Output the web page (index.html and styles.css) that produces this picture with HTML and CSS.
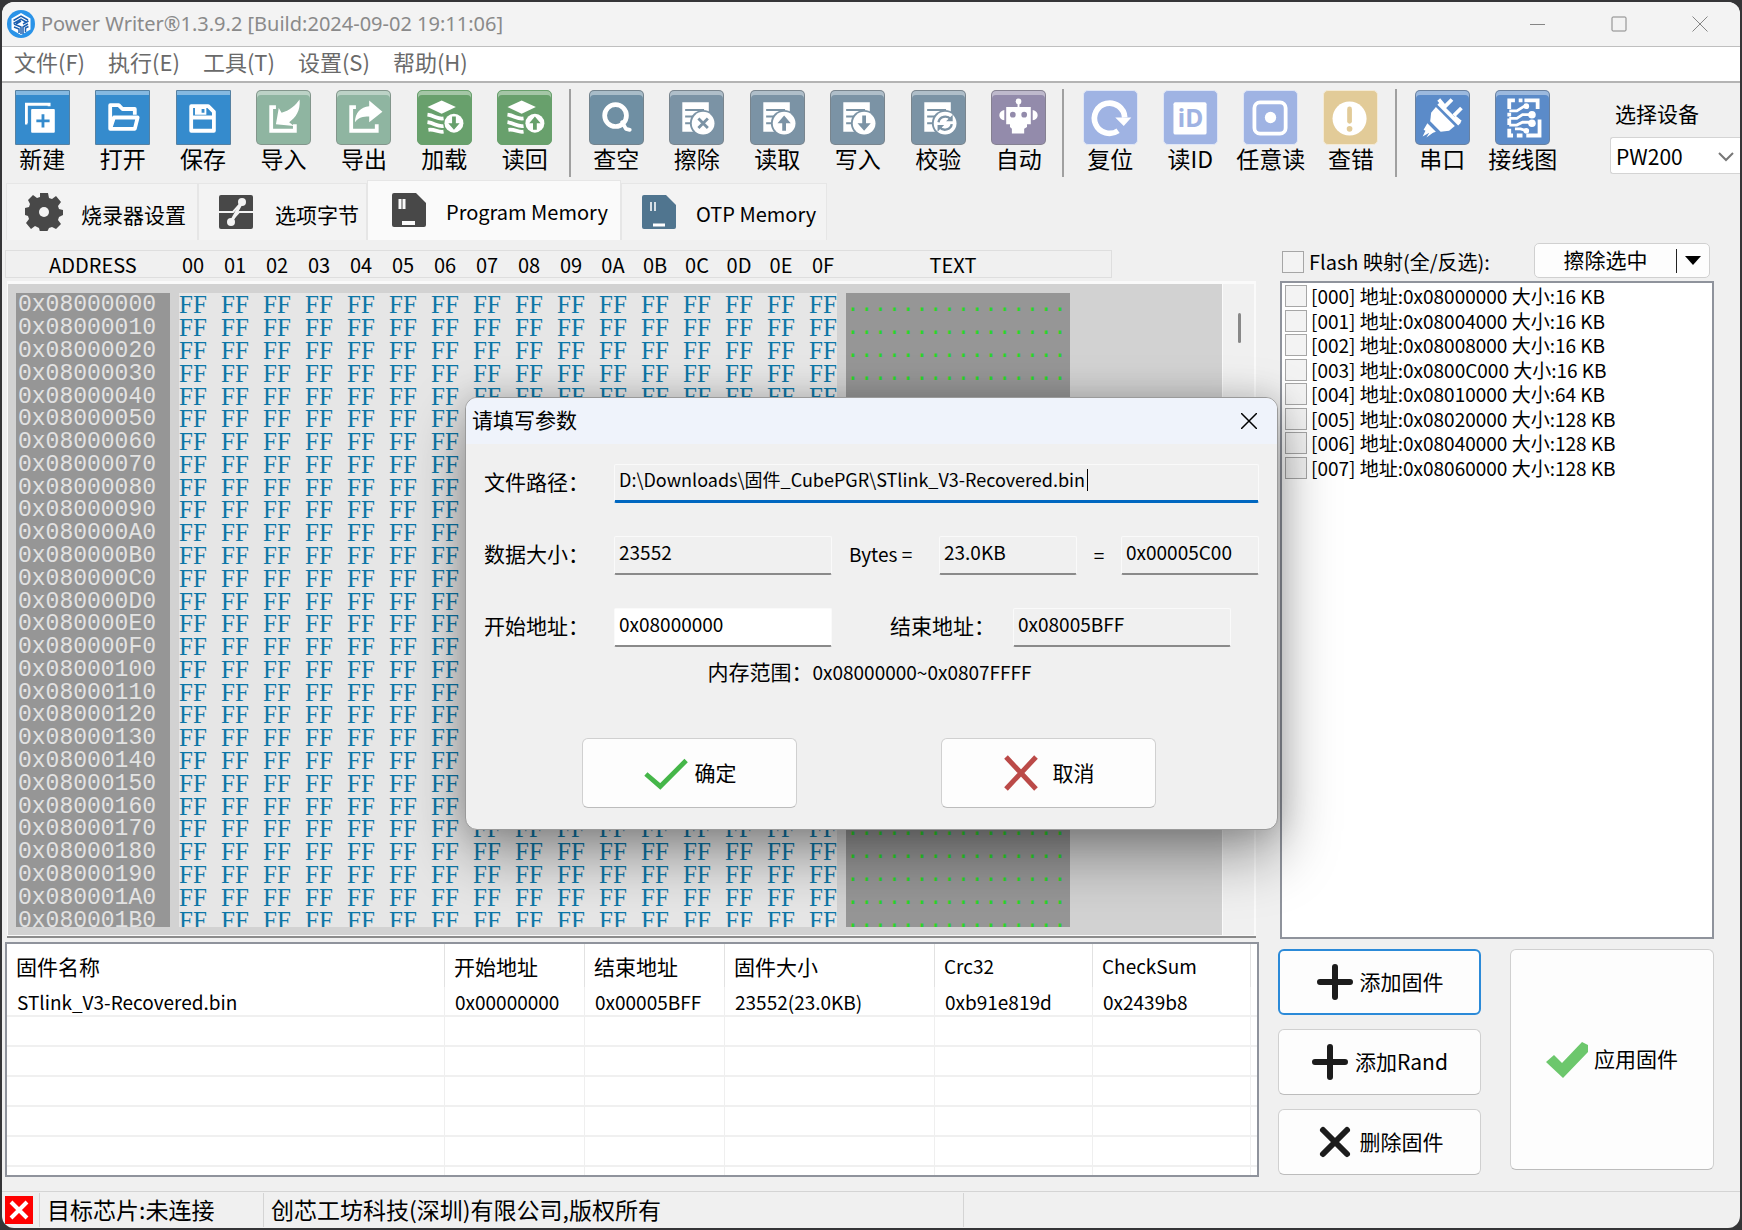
FILE: index.html
```html
<!DOCTYPE html>
<html lang="zh-CN">
<head>
<meta charset="utf-8">
<title>Power Writer</title>
<link rel="stylesheet" href="styles.css">
</head>
<body>
<div class="window">
  <header class="titlebar">
    <svg class="logo" viewBox="0 0 28 28" aria-hidden="true">
      <circle cx="14" cy="14" r="14" fill="#2a93e8"/>
      <path d="M14 3l9.500 5.500v11L14 25l-9.500-5.500v-11z" fill="#fff"/>
      <path d="M6.500 10.500L14 6l7 4M6.500 13.500L14 9l5 3M9 14l5-3M7 17l5 2v4M7 14l7 3v7M16 24v-7l5-3M16 14l5.500-3M18.500 22v-4l3-1.500" fill="none" stroke="#1c5fb0" stroke-width="1.500"/>
    </svg>
    <h1 class="title">Power Writer®1.3.9.2 [Build:2024-09-02 19:11:06]</h1>
    <div class="window-controls">
      <button type="button" aria-label="最小化"><svg viewBox="0 0 16 16"><path d="M0 8.500h15"/></svg></button>
      <button type="button" aria-label="最大化"><svg viewBox="0 0 16 16"><rect x="1" y="1" width="14" height="14" rx="1"/></svg></button>
      <button type="button" aria-label="关闭"><svg viewBox="0 0 16 16"><path d="M.5.5l15 15M15.500.5l-15 15"/></svg></button>
    </div>
  </header>

  <nav class="menubar">
    <a href="#file">文件(F)</a>
    <a href="#run">执行(E)</a>
    <a href="#tools">工具(T)</a>
    <a href="#settings">设置(S)</a>
    <a href="#help">帮助(H)</a>
  </nav>

  <div class="toolbar">
    <div class="tool-group">
      <button type="button" class="tool"><svg class="tile blue" viewBox="0 0 56 56"><path d="M12 34h-1V14h24v2" fill="none" stroke="#fff" stroke-width="3"/><rect x="16" y="19" width="25" height="25" rx="1" fill="#fff"/><path d="M28.500 24.500v14M21.500 31.500h14" stroke="#358bcd" stroke-width="3"/></svg>新建</button>
      <button type="button" class="tool"><svg class="tile blue" viewBox="0 0 56 56"><path d="M15 40V15h9l4 4h13v6M15 40l4-12h25l-3 12z" fill="none" stroke="#fff" stroke-width="4" stroke-linejoin="round"/></svg>打开</button>
      <button type="button" class="tool"><svg class="tile blue" viewBox="0 0 56 56"><path d="M15 16h18l6 6v20H15z" fill="none" stroke="#fff" stroke-width="4" stroke-linejoin="round"/><path d="M15 28h24" stroke="#fff" stroke-width="4"/><path d="M19 18h12v7H19z" fill="#fff"/><path d="M26 19h3v4h-3z" fill="#358bcd"/></svg>保存</button>
      <button type="button" class="tool"><svg class="tile mint" viewBox="0 0 56 56"><path d="M20 17h-5v25h25v-7" fill="none" stroke="#fff" stroke-width="4"/><path d="M45 9c1 12-4 19-11 24l5 4-19-2 3-17 3 5c8-2 15-8 19-14z" fill="#fff"/></svg>导入</button>
      <button type="button" class="tool"><svg class="tile mint" viewBox="0 0 56 56"><path d="M20 17h-5v25h27v-7" fill="none" stroke="#fff" stroke-width="4"/><path d="M34 10l14 12-14 11v-6c-7 0-11 1-15 6 0-10 6-16 15-17z" fill="#fff"/></svg>导出</button>
      <button type="button" class="tool"><svg class="tile green" viewBox="0 0 56 56"><path d="M10 17l15-7 15 7-15 7z" fill="#fff"/><path d="M10 25c8 1 10 5 17 4M10 33c8 1 10 5 17 4M11 41c7-1 10 3 16 2" fill="none" stroke="#fff" stroke-width="4"/><circle cx="38" cy="34" r="11" fill="#68a06c"/><circle cx="38" cy="34" r="10" fill="#fff"/><path d="M36 27h4v7h4l-6 7-6-7h4z" fill="#68a06c"/></svg>加载</button>
      <button type="button" class="tool"><svg class="tile green" viewBox="0 0 56 56"><path d="M10 17l15-7 15 7-15 7z" fill="#fff"/><path d="M10 25c8 1 10 5 17 4M10 33c8 1 10 5 17 4M11 41c7-1 10 3 16 2" fill="none" stroke="#fff" stroke-width="4"/><circle cx="39" cy="34" r="11" fill="#68a06c"/><circle cx="39" cy="34" r="10" fill="#fff"/><path d="M37 41h4v-7h4l-6-7-6 7h4z" fill="#68a06c"/></svg>读回</button>
    </div>
    <div class="tool-group six">
      <button type="button" class="tool"><svg class="tile teal" viewBox="0 0 56 56"><circle cx="27" cy="26" r="11.500" fill="none" stroke="#fff" stroke-width="5"/><path d="M34 33l4 7 4 1" fill="none" stroke="#fff" stroke-width="4" stroke-linejoin="round" stroke-linecap="round"/></svg>查空</button>
      <button type="button" class="tool"><svg class="tile slate" viewBox="0 0 56 56"><path d="M13 12h28v14H13zM13 12h14v31H13z" fill="#fff"/><path d="M16 20h20M16 27h12M16 34h8" stroke="#7b93a5" stroke-width="2"/><circle cx="35" cy="34" r="14" fill="#7b93a5"/><circle cx="35" cy="34" r="12" fill="#fff"/><path d="M30 29l10 10M40 29L30 39" stroke="#7b93a5" stroke-width="3"/></svg>擦除</button>
      <button type="button" class="tool"><svg class="tile slate" viewBox="0 0 56 56"><path d="M13 12h28v14H13zM13 12h14v31H13z" fill="#fff"/><path d="M16 20h20M16 27h12M16 34h8" stroke="#7b93a5" stroke-width="2"/><circle cx="35" cy="34" r="14" fill="#7b93a5"/><circle cx="35" cy="34" r="12" fill="#fff"/><path d="M33 42v-8h-5l7-8 7 8h-5v8z" fill="#7b93a5"/></svg>读取</button>
      <button type="button" class="tool"><svg class="tile slate" viewBox="0 0 56 56"><path d="M13 12h28v14H13zM13 12h14v31H13z" fill="#fff"/><path d="M16 20h20M16 27h12M16 34h8" stroke="#7b93a5" stroke-width="2"/><circle cx="35" cy="34" r="14" fill="#7b93a5"/><circle cx="35" cy="34" r="12" fill="#fff"/><path d="M33 26v8h-5l7 8 7-8h-5v-8z" fill="#7b93a5"/></svg>写入</button>
      <button type="button" class="tool"><svg class="tile slate" viewBox="0 0 56 56"><path d="M13 12h28v14H13zM13 12h14v31H13z" fill="#fff"/><path d="M16 20h20M16 27h12M16 34h8" stroke="#7b93a5" stroke-width="2"/><circle cx="35" cy="34" r="14" fill="#7b93a5"/><circle cx="35" cy="34" r="12" fill="#fff"/><path d="M28 33c1-6 9-8 13-3M42 35c-1 6-9 8-13 3" fill="none" stroke="#7b93a5" stroke-width="2.500"/><path d="M43 25v7h-7zM27 43v-7h7z" fill="#7b93a5"/></svg>校验</button>
      <button type="button" class="tool"><svg class="tile purple" viewBox="0 0 56 56"><circle cx="28" cy="11" r="3" fill="#fff"/><path d="M27 12h2v6h-2zM15 17h26v18h-4v3l-3 2v5H21v-5l-2-2v-3h-4z" fill="#fff"/><path d="M13 20v11c-7-1-7-10 0-11zM43 20v11c7-1 7-10 0-11z" fill="#fff"/><circle cx="22" cy="25" r="3" fill="#938bab"/><circle cx="34" cy="25" r="3" fill="#938bab"/></svg>自动</button>
    </div>
    <div class="tool-group four">
      <button type="button" class="tool"><svg class="tile pale" viewBox="0 0 56 56"><path d="M43 28A16 16 0 1 0 36 42" fill="none" stroke="#fff" stroke-width="6"/><path d="M33 28h17l-8 9z" fill="#fff"/></svg>复位</button>
      <button type="button" class="tool"><svg class="tile pale" viewBox="0 0 56 56"><rect x="10" y="12" width="35" height="34" rx="2" fill="#fff"/><text x="28" y="38" text-anchor="middle" class="id-mark">iD</text></svg>读ID</button>
      <button type="button" class="tool"><svg class="tile pale" viewBox="0 0 56 56"><rect x="11" y="12" width="33" height="33" rx="6" fill="none" stroke="#fff" stroke-width="4"/><circle cx="28" cy="28" r="6" fill="#fff"/></svg>任意读</button>
      <button type="button" class="tool"><svg class="tile sand" viewBox="0 0 56 56"><circle cx="27" cy="29" r="18" fill="#fff"/><path d="M27 19v13" stroke="#e2cb98" stroke-width="5" stroke-linecap="round"/><circle cx="27" cy="40" r="3" fill="#e2cb98"/></svg>查错</button>
    </div>
    <div class="tool-group two">
      <button type="button" class="tool"><svg class="tile royal" viewBox="0 0 56 56"><path d="M24 13l22 22" stroke="#fff" stroke-width="4"/><path d="M21 17l20 20-6 5-9 1-11-11 1-9z" fill="#fff"/><path d="M30 17l8-8M40 26l8-8M24 9l6 7M41 28l6 5" stroke="#fff" stroke-width="4"/><path d="M12 34l9 9-3 1-7 5 3-5-7 4 3-6-2-1z" fill="#fff"/></svg>串口</button>
      <button type="button" class="tool"><svg class="tile royal" viewBox="0 0 56 56"><path d="M28 10h-4M20 10h-6v9M14 23v4M30 10h14v9M46 30v17H32M28 47h-6M18 47h-4v-7M14 36v-7" fill="none" stroke="#fff" stroke-width="4"/><path d="M14 21h8l8-5M14 29h8l6-4h7M14 36h8l6-3h7M20 40h6l6 2" fill="none" stroke="#fff" stroke-width="3"/><g fill="#fff"><circle cx="32" cy="16" r="3"/><circle cx="38" cy="25" r="4"/><circle cx="38" cy="34" r="4"/><circle cx="32" cy="42" r="3"/></g></svg>接线图</button>
    </div>
    <div class="device">
      <label for="device">选择设备</label>
      <div class="device-box">
        <select id="device"><option>PW200</option></select>
        <svg viewBox="0 0 16 10" aria-hidden="true"><path d="M1 1l7 7 7-7" fill="none" stroke="#777" stroke-width="2"/></svg>
      </div>
    </div>
  </div>

  <main class="workspace">
    <section class="left">
      <div class="tabs" role="tablist">
        <button type="button" role="tab" class="tab first"><svg viewBox="0 0 38 38"><path d="M15 0h8l1 5 3 1 4-3 5 6-3 4 1 3 4 1v5l-4 2-1 3 3 4-5 5-4-2-3 1-2 4h-7l-1-4-4-2-4 3-5-6 3-4-1-3-3-1v-7l4-1 1-3-2-4 5-5 4 3 3-1z" fill="#484848"/><circle cx="19" cy="19" r="5" fill="#f3f3f3"/></svg><span>烧录器设置</span></button>
        <button type="button" role="tab" class="tab second"><svg viewBox="0 0 38 38"><rect x="2" y="2" width="34" height="34" rx="2" fill="#484848"/><path d="M2 19h14l8-9M36 19H22l-8 9" fill="none" stroke="#f3f3f3" stroke-width="2"/><path d="M25 9L14 29" stroke="#f3f3f3" stroke-width="3"/><circle cx="25" cy="9" r="4" fill="#f3f3f3"/><circle cx="14" cy="29" r="4" fill="#f3f3f3"/></svg><span>选项字节</span></button>
        <button type="button" role="tab" class="tab active" aria-selected="true"><svg viewBox="0 0 38 38"><path d="M2 4q0-2 2-2h22l10 10v22q0 2-2 2H4q-2 0-2-2z" fill="#484848"/><path d="M10 8v10M14 8v10" stroke="#fafafa" stroke-width="3"/><path d="M12 32h13" stroke="#fafafa" stroke-width="4"/></svg><span>Program Memory</span></button>
        <button type="button" role="tab" class="tab last"><svg viewBox="0 0 38 38"><path d="M2 4q0-2 2-2h22l10 10v22q0 2-2 2H4q-2 0-2-2z" fill="#50758f"/><path d="M11 9v9M15 9v9" stroke="#d8e0e6" stroke-width="2"/><path d="M13 32h12" stroke="#fff" stroke-width="3"/></svg><span>OTP Memory</span></button>
      </div>

      <div class="hex-head">
        <span class="head-address">ADDRESS</span>
        <div class="head-bytes"><span>00</span><span>01</span><span>02</span><span>03</span><span>04</span><span>05</span><span>06</span><span>07</span><span>08</span><span>09</span><span>0A</span><span>0B</span><span>0C</span><span>0D</span><span>0E</span><span>0F</span></div>
        <span class="head-text">TEXT</span>
      </div>

      <div class="hex-panel">
        <div class="hex-clip">
          <table class="hex" aria-label="Program Memory">
            <colgroup><col class="c-addr"><col class="c-gap"><col class="c-byte" span="15"><col class="c-last"><col class="c-gap"><col class="c-text"></colgroup>
            <tbody id="hex-rows"></tbody>
          </table>
        </div>
        <div class="scrollbar"><div class="thumb"></div></div>
      </div>

      <div class="firmware">
        <table>
          <colgroup><col class="f-name"><col class="f-addr"><col class="f-addr"><col class="f-size"><col class="f-sum"><col class="f-sum"><col></colgroup>
          <thead><tr><th>固件名称</th><th>开始地址</th><th>结束地址</th><th>固件大小</th><th class="latin">Crc32</th><th class="latin">CheckSum</th><th></th></tr></thead>
          <tbody>
            <tr><td>STlink_V3-Recovered.bin</td><td>0x00000000</td><td>0x00005BFF</td><td>23552(23.0KB)</td><td>0xb91e819d</td><td>0x2439b8</td><td></td></tr>
            <tr><td></td><td></td><td></td><td></td><td></td><td></td><td></td></tr>
            <tr><td></td><td></td><td></td><td></td><td></td><td></td><td></td></tr>
            <tr><td></td><td></td><td></td><td></td><td></td><td></td><td></td></tr>
            <tr><td></td><td></td><td></td><td></td><td></td><td></td><td></td></tr>
            <tr><td></td><td></td><td></td><td></td><td></td><td></td><td></td></tr>
            <tr><td></td><td></td><td></td><td></td><td></td><td></td><td></td></tr>
          </tbody>
        </table>
      </div>
    </section>

    <section class="right">
      <div class="map-head">
        <label class="map-all"><input type="checkbox">Flash 映射(全/反选):</label>
        <button type="button" class="erase"><span>擦除选中</span><svg viewBox="0 0 18 10" aria-hidden="true"><path d="M1 0h16L9 9z"/></svg></button>
      </div>
      <div class="map">
        <div class="map-rows">
          <label><input type="checkbox">[000] 地址:0x08000000 大小:16 KB</label>
          <label><input type="checkbox">[001] 地址:0x08004000 大小:16 KB</label>
          <label><input type="checkbox">[002] 地址:0x08008000 大小:16 KB</label>
          <label><input type="checkbox">[003] 地址:0x0800C000 大小:16 KB</label>
          <label><input type="checkbox">[004] 地址:0x08010000 大小:64 KB</label>
          <label><input type="checkbox">[005] 地址:0x08020000 大小:128 KB</label>
          <label><input type="checkbox">[006] 地址:0x08040000 大小:128 KB</label>
          <label><input type="checkbox">[007] 地址:0x08060000 大小:128 KB</label>
        </div>
      </div>
      <div class="actions">
        <div class="action-stack">
          <button type="button" class="btn focused"><svg viewBox="0 0 38 38"><path d="M19 4v30M4 19h30"/></svg><span>添加固件</span></button>
          <button type="button" class="btn"><svg viewBox="0 0 38 38"><path d="M19 4v30M4 19h30"/></svg><span>添加Rand</span></button>
          <button type="button" class="btn"><svg viewBox="0 0 38 38"><path d="M7 7l24 24M31 7L7 31"/></svg><span>删除固件</span></button>
        </div>
        <button type="button" class="btn apply"><svg viewBox="0 0 42 38"><path d="M0 21l8-7 8 8L36 1l6 3v7L17 37z"/></svg><span>应用固件</span></button>
      </div>
    </section>
  </main>

  <footer class="statusbar">
    <div class="status-icon"><svg viewBox="0 0 28 28" aria-hidden="true"><rect width="28" height="28" fill="#f00"/><path d="M6 6l16 16M22 6L6 22" stroke="#fff" stroke-width="4"/></svg></div>
    <div class="status-chip">目标芯片:未连接</div>
    <div class="status-owner">创芯工坊科技(深圳)有限公司,版权所有</div>
  </footer>
</div>

<div class="dialog" role="dialog" aria-labelledby="dialog-title">
  <div class="dialog-title">
    <h2 id="dialog-title">请填写参数</h2>
    <button type="button" aria-label="关闭"><svg viewBox="0 0 16 16"><path d="M0 0l16 16M16 0L0 16" stroke="#000" stroke-width="1.500"/></svg></button>
  </div>
  <form class="dialog-body">
    <div class="row">
      <label for="path">文件路径：</label>
      <div class="path-box"><input id="path" class="field path" value="D:\Downloads\固件_CubePGR\STlink_V3-Recovered.bin"><i class="caret"></i></div>
    </div>
    <div class="row">
      <label for="size">数据大小：</label>
      <input id="size" class="field wide" value="23552" readonly>
      <span class="unit">Bytes =</span>
      <input class="field small" aria-label="KB" value="23.0KB" readonly>
      <span class="equals">=</span>
      <input class="field small" aria-label="Hex" value="0x00005C00" readonly>
    </div>
    <div class="row">
      <label for="start">开始地址：</label>
      <input id="start" class="field wide editable" value="0x08000000">
      <label for="end" class="end-label">结束地址：</label>
      <input id="end" class="field wide" value="0x08005BFF" readonly>
    </div>
    <p class="range">内存范围：<span>0x08000000~0x0807FFFF</span></p>
    <div class="dialog-actions">
      <button type="button" class="btn"><svg class="ok" viewBox="0 0 48 38"><path d="M3 20l15 13L45 6" fill="none" stroke="#45b649" stroke-width="5"/></svg><span>确定</span></button>
      <button type="button" class="btn"><svg class="cancel" viewBox="0 0 38 38"><path d="M3 3l30 32M33 3L3 35" fill="none" stroke="#bb4a48" stroke-width="5"/></svg><span>取消</span></button>
    </div>
  </form>
</div>
<script src="hex.js"></script>
</body>
</html>
```
FILE: hex.js
```js
const BASE = 0x08000000;
const ROWS = 28;
const BYTES = 16;

const body = document.getElementById('hex-rows');

function cell(row, className, text) {
  const td = document.createElement('td');
  td.className = className;
  td.textContent = text;
  row.appendChild(td);
}

for (let r = 0; r < ROWS; r++) {
  const row = document.createElement('tr');
  const address = (BASE + r * BYTES).toString(16).toUpperCase().padStart(8, '0');
  cell(row, 'addr', '0x' + address);
  cell(row, 'gap', '');
  for (let b = 0; b < BYTES; b++) cell(row, 'byte', 'FF');
  cell(row, 'gap', '');
  cell(row, 'text', '.'.repeat(BYTES));
  body.appendChild(row);
}
```
FILE: styles.css
```css
* { box-sizing: border-box; }

html { height: 100%; }

body {
  margin: 0;
  height: 100%;
  padding: 2px;
  display: flex;
  background: #353537;
  color: #000;
  font-family: "Noto Sans CJK SC", sans-serif;
  font-size: 21px;
  line-height: 24px;
  overflow: hidden;
}

button, input, select { font: inherit; color: inherit; margin: 0; }
button { border: 0; padding: 0; background: none; white-space: nowrap; }
svg { display: block; flex: none; }

.window {
  flex: 1;
  min-width: 0;
  display: flex;
  flex-direction: column;
  background: #f0f0f0;
  border-radius: 12px;
  overflow: hidden;
}

/* title bar */
.titlebar {
  height: 45px;
  flex: none;
  display: flex;
  align-items: center;
  padding-left: 5px;
  background: #f3f3f3;
  border-bottom: 1px solid #bfbfbf;
}
.logo { width: 28px; height: 28px; }
.title {
  flex: 1;
  margin: 0 0 0 6px;
  font-family: "Noto Sans", sans-serif;
  font-size: 20px;
  font-weight: 400;
  color: #8a8a8a;
}
.window-controls { display: flex; }
.window-controls button { width: 81px; height: 44px; display: grid; place-items: center; }
.window-controls svg { width: 16px; height: 16px; fill: none; stroke: #858585; }

/* menu */
.menubar {
  height: 34px;
  flex: none;
  display: flex;
  align-items: center;
  gap: 23px;
  padding: 0 0 6px 12px;
  background: #fff;
  font-size: 22px;
}
.menubar a { color: #6a6a6a; text-decoration: none; }

/* toolbar */
.toolbar {
  flex: none;
  height: 99px;
  display: flex;
  border-top: 2px solid #b4b4b4;
  padding-top: 6px;
}
.tool-group {
  width: 569px;
  height: 88px;
  display: grid;
  grid-auto-flow: column;
  grid-auto-columns: 1fr;
  padding-top: 1px;
  padding-right: 4px;
  border-right: 2px solid #a0a0a0;
}
.tool-group.six { width: 493px; padding-left: 5px; padding-right: 3px; }
.tool-group.four { width: 333px; padding-left: 6px; }
.tool-group.two { width: 170px; padding: 1px 4px 0 5px; border: 0; }
.tool {
  display: flex;
  flex-direction: column;
  align-items: center;
  justify-content: flex-start;
  gap: 1px;
  font-size: 23px;
}
.tile {
  width: 55px;
  height: 55px;
  border-radius: 5px;
  border: 1px solid rgba(120, 120, 120, .5);
  box-shadow: inset 0 4px 0 rgba(255, 255, 255, .4);
}
.blue { background: #358bcd; border-radius: 1px; }
.mint { background: #8fb5a1; }
.green { background: #68a06c; border-color: #68a06c; }
.teal { background: #6f8fa3; }
.slate { background: #7b93a5; }
.purple { background: #938bab; }
.pale { background: #9fb3e3; border-color: #dfe6f6; box-shadow: none; }
.sand { background: #e2cb98; border-color: #f4ead5; box-shadow: none; }
.royal { background: #5b8bc9; }
.id-mark { font: 700 26px "Noto Sans", sans-serif; fill: #9fb3e3; }

.device { flex: 1; margin-left: 43px; padding-top: 12px; }
.device label { display: block; padding-left: 5px; }
.device-box {
  position: relative;
  margin-top: 12px;
}
.device-box select {
  appearance: none;
  width: 100%;
  height: 37px;
  padding: 0 5px;
  border: 1px solid #d4d4d4;
  border-right: 0;
  border-radius: 3px 0 0 3px;
  background: #fff;
  font-size: 21px;
}
.device-box svg { position: absolute; right: 6px; top: 15px; width: 16px; height: 10px; }

/* workspace */
.workspace {
  flex: 1;
  min-height: 0;
  display: grid;
  grid-template-columns: minmax(0, 1fr) 436px;
  column-gap: 19px;
  padding: 0 26px 14px 3px;
}
.left, .right { display: flex; flex-direction: column; min-height: 0; }

.tabs { flex: none; display: flex; align-items: flex-end; height: 60px; }
.tab {
  height: 57px;
  display: flex;
  align-items: center;
  background: #f3f3f3;
  border: 1px solid #e6e6e6;
  border-bottom: 0;
}
.tab svg { width: 38px; height: 38px; margin-left: 18px; margin-right: 18px; }
.tab span { padding-top: 4px; }
.tab.first { width: 192px; margin-left: 1px; }
.tab.second { width: 169px; }
.tab.second svg { margin-right: 20px; }
.tab.active { width: 254px; height: 60px; background: #fafafa; font-size: 20px; padding-bottom: 2px; }
.tab.active svg { margin-left: 22px; }
.tab.last { width: 206px; font-size: 20px; }

.hex-head {
  flex: none;
  display: flex;
  align-items: center;
  width: 1107px;
  height: 28px;
  margin-top: 10px;
  padding-top: 2px;
  border: 1px solid #dedede;
  font-size: 20px;
}
.head-address { width: 166px; padding-left: 43px; }
.head-bytes { width: 672px; display: grid; grid-template-columns: repeat(16, 1fr); text-align: center; }
.head-text { width: 218px; text-align: center; }

.hex-panel {
  flex: 1;
  min-height: 0;
  margin: 3px 3px 0 2px;
  display: flex;
  background: #d2d2d2;
  border: solid #fafafa;
  border-width: 3px 2px 1px 1px;
  box-shadow: 0 2px 0 #8c8c8c;
}
.hex-clip { flex: 1; margin: 9px 0 8px 8px; overflow: hidden; }
.hex {
  width: 1054px;
  height: 638px;
  table-layout: fixed;
  border-collapse: collapse;
  font-family: "Liberation Mono", monospace;
  font-size: 23px;
  line-height: 20px;
}
.hex td { padding: 2px 0 0; white-space: nowrap; }
.c-addr { width: 154px; }
.c-gap { width: 9px; }
.c-byte { width: 42px; }
.c-last { width: 28px; }
.c-text { width: 224px; }
.hex .addr { background: #969696; color: #e2e2e2; padding-left: 2px; }
.hex .byte {
  background: #e6e6e6;
  color: #0c76a6;
  font-family: "Liberation Serif", serif;
  font-size: 25px;
}
.hex .text { background: #969696; color: #2bd42b; }
.scrollbar { width: 32px; background: #f0f0f0; border-left: 1px solid #fafafa; padding: 29px 0 0 15px; }
.thumb { width: 3px; height: 30px; background: #888; border-radius: 2px; }

.firmware {
  flex: none;
  height: 235px;
  margin-top: 6px;
  border: 2px solid #8f939c;
  background: #fff;
  overflow: hidden;
}
.firmware table { width: 100%; table-layout: fixed; border-collapse: separate; border-spacing: 0; }
.f-name { width: 438px; }
.f-addr { width: 140px; }
.f-size { width: 210px; }
.f-sum { width: 158px; }
.firmware th {
  height: 43px;
  padding: 0 0 0 9px;
  border-right: 1px solid #e2e2e2;
  font-weight: 400;
  text-align: left;
}
.firmware th.latin { font-size: 19px; }
.firmware td {
  height: 30px;
  padding: 2px 0 0 10px;
  border-right: 1px solid #efefef;
  border-bottom: 2px solid #f0f0f0;
  font-size: 19px;
}
.firmware th:last-child, .firmware td:last-child { border-right: 0; padding: 0; }

/* right column */
.map-head {
  height: 35px;
  flex: none;
  display: flex;
  justify-content: space-between;
  align-items: center;
  margin: 63px 4px 3px 4px;
}
input[type="checkbox"] {
  appearance: none;
  flex: none;
  width: 22px;
  height: 22px;
  border: 1px solid #a6a6a6;
  background: #f3f3f3;
}
.map-all { display: flex; align-items: center; gap: 5px; padding-top: 2px; font-size: 20px; }
.erase {
  width: 176px;
  height: 35px;
  display: flex;
  align-items: center;
  background: #fdfdfd;
  border: 1px solid #d0d0d0;
  border-radius: 5px;
}
.erase span { flex: 1; border-right: 1px solid #222; line-height: 20px; padding-bottom: 4px; }
.erase svg { width: 18px; height: 10px; margin: 0 7px; }

.map {
  flex: 1;
  min-height: 0;
  margin-left: 2px;
  padding: 1px 3px;
  border: 2px solid #8f939c;
  background: #fff;
}
.map-rows { height: 196px; display: grid; grid-auto-rows: 1fr; }
.map-rows label { display: flex; align-items: center; gap: 4px; font-size: 19px; white-space: nowrap; }

.actions { flex: none; display: grid; grid-template-columns: 203px 204px; justify-content: space-between; margin-top: 10px; height: 228px; }
.action-stack { display: grid; grid-auto-rows: 66px; gap: 14px; }
.btn {
  display: flex;
  align-items: center;
  justify-content: center;
  gap: 6px;
  background: #fdfdfd;
  border: 1px solid #d0d0d0;
  border-bottom-color: #bcbcbc;
  border-radius: 6px;
}
.btn span { padding-bottom: 3px; }
.btn.focused { border: 2px solid #2b8ad8; }
.action-stack svg { width: 38px; height: 38px; stroke: #1c1c1c; stroke-width: 6; stroke-linecap: round; }
.apply { height: 221px; }
.apply svg { width: 42px; height: 38px; fill: #6cc76c; }

/* status bar */
.statusbar {
  flex: none;
  height: 37px;
  display: flex;
  align-items: center;
  border-top: 1px solid #d4d4d4;
  font-size: 23px;
}
.statusbar > div { height: 34px; display: flex; align-items: center; border-right: 1px solid #d4d4d4; padding-bottom: 2px; }
.statusbar > .status-icon { width: 38px; padding: 0 0 0 3px; }
.status-icon svg { width: 28px; height: 28px; }
.status-chip { width: 224px; padding-left: 7px; }
.status-owner { width: 700px; padding-left: 7px; }

/* dialog floating over the main window */
.dialog {
  position: absolute;
  left: 465px;
  top: 397px;
  width: 813px;
  background: #f0f0f0;
  border: 1px solid #9a9a9a;
  border-radius: 12px;
  box-shadow: 0 24px 60px rgba(0, 0, 0, .4), 0 0 30px rgba(0, 0, 0, .15);
  overflow: hidden;
}
.dialog-title {
  height: 46px;
  display: flex;
  align-items: center;
  justify-content: space-between;
  padding: 0 20px 0 6px;
  background: #eff3fb;
}
.dialog-title h2 { margin: 0; padding-bottom: 4px; font-size: 21px; font-weight: 400; }
.dialog-title svg { width: 16px; height: 16px; }
.dialog-body { padding: 20px 18px 21px; }
.row { display: flex; align-items: center; margin-bottom: 33px; }
.row label { width: 130px; flex: none; padding-bottom: 6px; }
.field {
  height: 39px;
  padding: 0 4px 8px;
  border: 1px solid #fafafa;
  border-bottom: 2px solid #8a8a8a;
  border-radius: 2px;
  background: #f0f0f0;
  font-size: 19px;
  outline: 0;
}
.path-box { flex: 1; position: relative; display: flex; }
.field.path { width: 100%; border-bottom: 3px solid #0067c0; font-size: 18px; }
.caret { position: absolute; left: 473px; top: 5px; width: 1px; height: 22px; background: #000; }
.field.wide { width: 218px; }
.field.small { width: 138px; }
.field.editable { background: #fff; }
.unit { width: 90px; margin-left: 17px; padding-bottom: 4px; font-size: 19px; }
.equals { flex: 1; text-align: center; padding-bottom: 2px; font-size: 19px; }
.row .end-label { width: 123px; margin-left: 58px; }
.range { margin: -21px 0 54px; padding-right: 4px; text-align: center; }
.range span { font-size: 19px; }
.dialog-actions { display: grid; grid-template-columns: 215px 215px; column-gap: 144px; margin-left: 98px; }
.dialog-actions .btn { height: 70px; }
.dialog-actions .ok { width: 46px; height: 38px; }
.dialog-actions .cancel { width: 38px; height: 38px; margin-right: 6px; }
```
